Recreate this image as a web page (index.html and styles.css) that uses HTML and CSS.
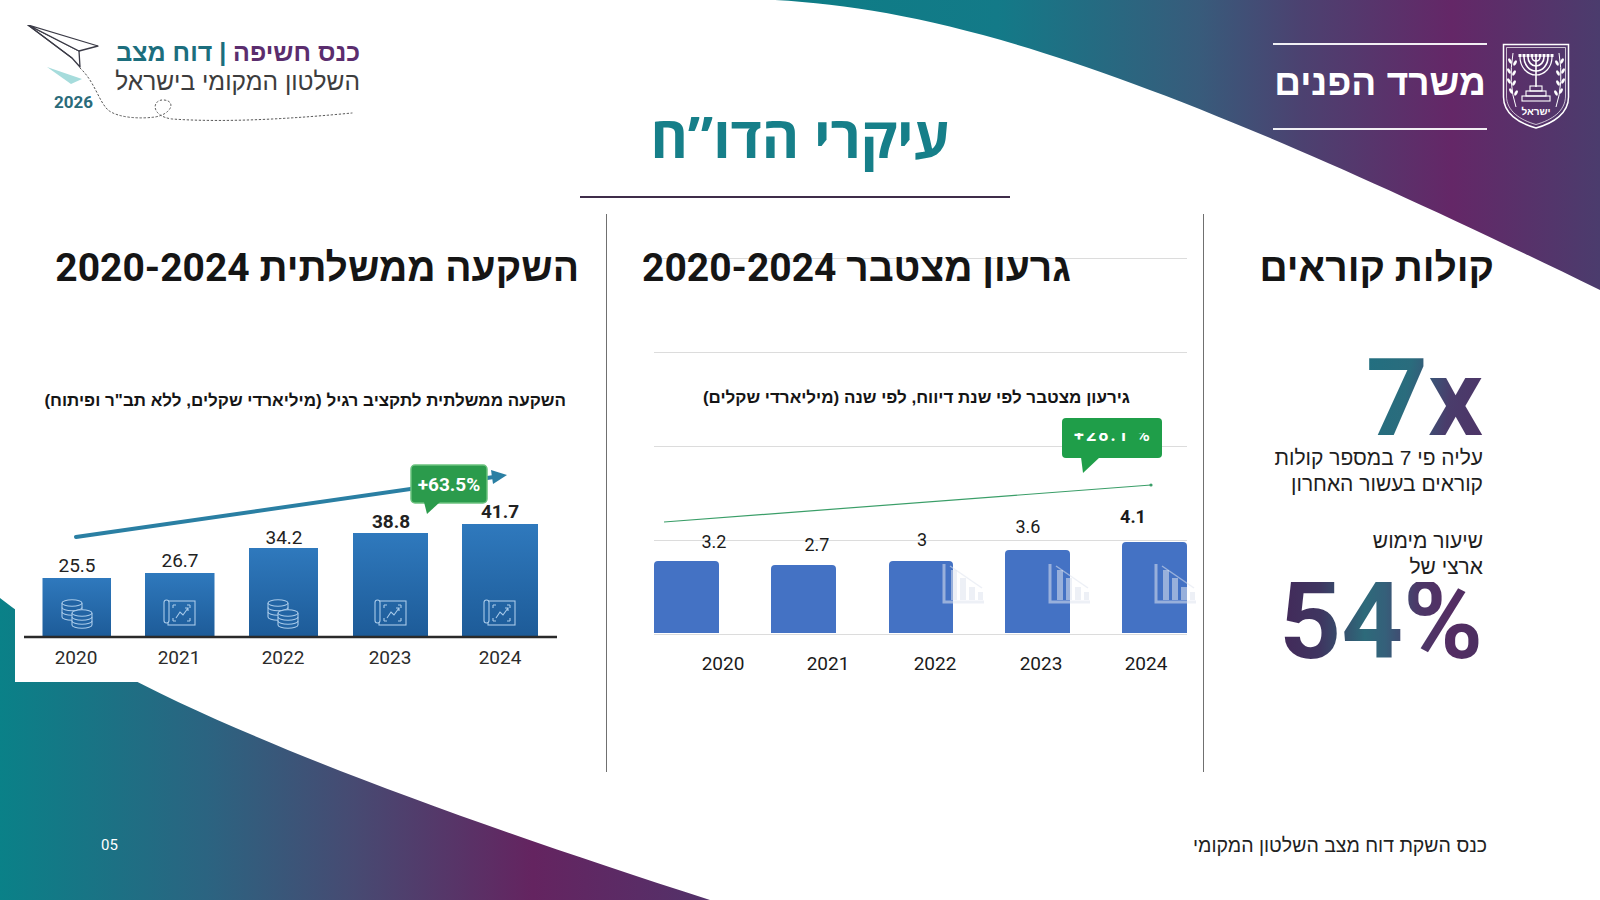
FILE: index.html
```html
<!DOCTYPE html>
<html lang="he">
<head>
<meta charset="utf-8">
<title>עיקרי הדו”ח</title>
<link rel="stylesheet" href="styles.css">
</head>
<body>
<div class="slide">
  <svg class="bg bg-top" viewBox="775 0 825 300" width="825" height="300" aria-hidden="true">
    <defs>
      <linearGradient id="gTop" gradientUnits="userSpaceOnUse" x1="775" y1="0" x2="1600" y2="0">
        <stop offset="0" stop-color="#0d7d86"/>
        <stop offset="0.27" stop-color="#137a88"/>
        <stop offset="0.515" stop-color="#385b7b"/>
        <stop offset="0.64" stop-color="#4c4170"/>
        <stop offset="0.82" stop-color="#642767"/>
        <stop offset="1" stop-color="#4b3c6d"/>
      </linearGradient>
    </defs>
    <path d="M775,0 L1600,0 L1600,290 C1150,70 950,10 775,0 Z" fill="url(#gTop)"/>
  </svg>
  <svg class="bg bg-bottom" viewBox="0 590 710 310" width="710" height="310" aria-hidden="true">
    <defs>
      <linearGradient id="gBot" gradientUnits="userSpaceOnUse" x1="0" y1="0" x2="710" y2="0">
        <stop offset="0" stop-color="#0a8188"/>
        <stop offset="0.29" stop-color="#2b6481"/>
        <stop offset="0.5" stop-color="#474a72"/>
        <stop offset="0.75" stop-color="#642460"/>
        <stop offset="0.9" stop-color="#5a2c66"/>
        <stop offset="1" stop-color="#523269"/>
      </linearGradient>
    </defs>
    <path d="M0,598 C130,700 400,800 710,900 L0,900 Z" fill="url(#gBot)"/>
  </svg>

  <header class="top">
    <div class="brand">
      <svg class="brand-art" viewBox="27 25 333 100" width="333" height="100" aria-hidden="true">
        <polygon points="47,67 82,79 71,84" fill="#a6dcdc"/>
        <path d="M80,68 C95,82 98,100 108,110 C118,118 140,119 155,117 C172,114 176,101 164,100 C152,99 150,116 172,119 C230,123 300,118 352,113" fill="none" stroke="#555" stroke-width="1" stroke-dasharray="1.5 2.5" stroke-linecap="round"/>
        <path d="M28,25 L79,51 L80,67 L72,58 Z" fill="#fff" stroke="#3a3a46" stroke-width="1.3" stroke-linejoin="round"/>
        <path d="M28,25 L98,46 L79,51 Z" fill="#fff" stroke="#3a3a46" stroke-width="1.3" stroke-linejoin="round"/>
        <path d="M28,25 L72,58" stroke="#3a3a46" stroke-width="1.1"/>
      </svg>
      <div class="brand-text">
        <div class="brand-l1">כנס חשיפה <span class="teal">| דוח מצב</span></div>
        <div class="brand-l2">השלטון המקומי בישראל</div>
      </div>
      <div class="brand-year">2026</div>
    </div>

    <div class="title-wrap">
      <h1 class="title">עיקרי הדו”ח</h1>
      <div class="title-rule"></div>
    </div>

    <div class="ministry">
      <div class="min-text">משרד הפנים</div>
      <svg class="emblem" viewBox="0 0 68 86" width="68" height="86" aria-hidden="true">
        <path d="M1.5,1.5 H66.5 V54 C66.5,70 52,80 34,85 C16,80 1.5,70 1.5,54 Z" fill="none" stroke="#fff" stroke-width="1.5"/>
        <path d="M4.5,4.5 H63.5 V53 C63.5,68 50,77 34,81.5 C18,77 4.5,68 4.5,53 Z" fill="none" stroke="#fff" stroke-width="0.7"/>
        <g fill="none" stroke="#fff" stroke-width="1.6">
          <path d="M34,14 V44"/>
          <path d="M30,14 A4,4 0 0 0 38,14"/>
          <path d="M26,14 A8,9 0 0 0 42,14"/>
          <path d="M22,14 A12,14 0 0 0 46,14"/>
          <path d="M18,14 A16,18 0 0 0 50,14" stroke-width="1.2"/>
        </g>
        <g fill="#fff">
          <rect x="16.5" y="11" width="3" height="3"/>
          <rect x="20.5" y="11" width="3" height="3"/>
          <rect x="24.5" y="11" width="3" height="3"/>
          <rect x="28.5" y="11" width="3" height="3"/>
          <rect x="32.5" y="11" width="3" height="3"/>
          <rect x="36.5" y="11" width="3" height="3"/>
          <rect x="40.5" y="11" width="3" height="3"/>
          <rect x="44.5" y="11" width="3" height="3"/>
          <rect x="48.5" y="11" width="3" height="3"/>
        </g>
        <g fill="none" stroke="#fff" stroke-width="1.1">
          <rect x="28" y="43" width="12" height="5"/>
          <rect x="24" y="48" width="20" height="5"/>
          <rect x="20" y="53" width="28" height="5"/>
        </g>
        <g fill="none" stroke="#fff" stroke-width="1">
          <path d="M14,64 Q6,40 11,10"/>
          <path d="M54,64 Q62,40 57,10"/>
        </g>
        <g fill="#fff">
          <ellipse cx="8" cy="18" rx="1.4" ry="3" transform="rotate(-30 8 18)"/>
          <ellipse cx="13" cy="20" rx="1.4" ry="3" transform="rotate(30 13 20)"/>
          <ellipse cx="7" cy="28" rx="1.4" ry="3" transform="rotate(-30 7 28)"/>
          <ellipse cx="12" cy="30" rx="1.4" ry="3" transform="rotate(30 12 30)"/>
          <ellipse cx="7" cy="38" rx="1.4" ry="3" transform="rotate(-30 7 38)"/>
          <ellipse cx="12" cy="40" rx="1.4" ry="3" transform="rotate(30 12 40)"/>
          <ellipse cx="9" cy="48" rx="1.4" ry="3" transform="rotate(-30 9 48)"/>
          <ellipse cx="14" cy="50" rx="1.4" ry="3" transform="rotate(30 14 50)"/>
          <ellipse cx="60" cy="18" rx="1.4" ry="3" transform="rotate(30 60 18)"/>
          <ellipse cx="55" cy="20" rx="1.4" ry="3" transform="rotate(-30 55 20)"/>
          <ellipse cx="61" cy="28" rx="1.4" ry="3" transform="rotate(30 61 28)"/>
          <ellipse cx="56" cy="30" rx="1.4" ry="3" transform="rotate(-30 56 30)"/>
          <ellipse cx="61" cy="38" rx="1.4" ry="3" transform="rotate(30 61 38)"/>
          <ellipse cx="56" cy="40" rx="1.4" ry="3" transform="rotate(-30 56 40)"/>
          <ellipse cx="59" cy="48" rx="1.4" ry="3" transform="rotate(30 59 48)"/>
          <ellipse cx="54" cy="50" rx="1.4" ry="3" transform="rotate(-30 54 50)"/>
        </g>
        <text x="34" y="72" class="emblem-text">ישראל</text>
      </svg>
    </div>
  </header>

  <main class="cols">
    <section class="col col-invest">
      <h2 class="col-head">השקעה ממשלתית 2020-2024</h2>
      <p class="sub">השקעה ממשלתית לתקציב רגיל (מיליארדי שקלים, ללא תב"ר ופיתוח)</p>
      <svg class="chart-invest" viewBox="15 432 575 250" width="575" height="250">
        <defs>
          <linearGradient id="barBlue" x1="0" y1="0" x2="0" y2="1">
            <stop offset="0" stop-color="#2f79bd"/>
            <stop offset="1" stop-color="#1d5b98"/>
          </linearGradient>
          <g id="coins" fill="#2264a4" stroke="#a9cbea" stroke-width="1.1">
            <path d="M2,5 V19 A10,3.2 0 0 0 22,19 V5"/>
            <ellipse cx="12" cy="5" rx="10" ry="3.2"/>
            <path d="M2,9.5 A10,3.2 0 0 0 22,9.5 M2,14 A10,3.2 0 0 0 22,14" fill="none"/>
            <path d="M12,15 V27 A10,3.2 0 0 0 32,27 V15"/>
            <ellipse cx="22" cy="15" rx="10" ry="3.2"/>
            <path d="M12,19 A10,3.2 0 0 0 32,19 M12,23 A10,3.2 0 0 0 32,23" fill="none"/>
          </g>
          <g id="plan" fill="none" stroke="#a9cbea" stroke-width="1.1">
            <rect x="5" y="3" width="27" height="24"/>
            <rect x="1" y="2" width="5" height="23" rx="2.5" fill="#2264a4"/>
            <path d="M10,7 H13 M10,7 V10 M27,7 H24 M27,7 V10 M10,23 H13 M10,23 V20 M27,23 H24 M27,23 V20"/>
            <path d="M13,20 L17,14 L20,17 L25,10 M22,10 H25 V13"/>
          </g>
        </defs>
        <rect x="42.5" y="578" width="68.5" height="59" fill="url(#barBlue)"/>
        <rect x="145" y="573" width="69.5" height="64" fill="url(#barBlue)"/>
        <rect x="249" y="548" width="69" height="89" fill="url(#barBlue)"/>
        <rect x="353" y="533" width="75" height="104" fill="url(#barBlue)"/>
        <rect x="462" y="524" width="76" height="113" fill="url(#barBlue)"/>
        <line x1="24" y1="637" x2="557" y2="637" stroke="#2a2a2a" stroke-width="2.5"/>
        <use href="#coins" x="60" y="598"/>
        <use href="#plan" x="163" y="598"/>
        <use href="#coins" x="266" y="598"/>
        <use href="#plan" x="374" y="598"/>
        <use href="#plan" x="483" y="598"/>
        <g class="lc-val">
          <text x="77" y="572">25.5</text>
          <text x="180" y="567">26.7</text>
          <text x="284" y="544">34.2</text>
          <text x="391" y="528" class="b">38.8</text>
          <text x="500" y="518" class="b">41.7</text>
        </g>
        <g class="lc-year">
          <text x="76" y="664">2020</text>
          <text x="179" y="664">2021</text>
          <text x="283" y="664">2022</text>
          <text x="390" y="664">2023</text>
          <text x="500" y="664">2024</text>
        </g>
        <line x1="76" y1="537" x2="494" y2="477" stroke="#2a7fa3" stroke-width="4" stroke-linecap="round"/>
        <polygon points="507,475 491,470 493,484" fill="#2a7fa3"/>
        <rect x="411" y="465" width="76" height="38" rx="4" fill="#2b9b4c" stroke="#6cc27f" stroke-width="1.5"/>
        <polygon points="424,502 440,502 427,514" fill="#2b9b4c"/>
        <text x="449" y="491" class="lc-callout">+63.5%</text>
      </svg>
    </section>

    <section class="col col-deficit">
      <h2 class="col-head">גרעון מצטבר 2020-2024</h2>
      <p class="sub">גירעון מצטבר לפי שנת דיווח, לפי שנה (מיליארדי שקלים)</p>
      <svg class="chart-deficit" viewBox="640 410 560 270" width="560" height="270">
        <defs>
          <g id="wm" fill="rgba(222,227,238,0.55)">
            <path d="M2,2 V40 H42" fill="none" stroke="rgba(222,227,238,0.55)" stroke-width="3"/>
            <rect x="9" y="8" width="6" height="30"/>
            <rect x="18" y="16" width="6" height="22"/>
            <rect x="27" y="25" width="6" height="13"/>
            <rect x="36" y="30" width="5" height="8"/>
            <path d="M8,4 L40,26" stroke="rgba(222,227,238,0.55)" stroke-width="1.5"/>
          </g>
          <clipPath id="halfclip"><rect x="1062" y="433" width="100" height="20"/></clipPath>
        </defs>
        <g fill="#4472c4">
          <path d="M654,633 V565 Q654,561 658,561 H715 Q719,561 719,565 V633 Z"/>
          <path d="M771,633 V569 Q771,565 775,565 H832 Q836,565 836,569 V633 Z"/>
          <path d="M889,633 V565 Q889,561 893,561 H949 Q953,561 953,565 V633 Z"/>
          <path d="M1005,633 V554 Q1005,550 1009,550 H1066 Q1070,550 1070,554 V633 Z"/>
          <path d="M1122,633 V546 Q1122,542 1126,542 H1183 Q1187,542 1187,546 V633 Z"/>
        </g>
        <use href="#wm" x="942" y="562"/>
        <use href="#wm" x="1048" y="562"/>
        <use href="#wm" x="1154" y="562"/>
        <g class="dc-val">
          <text x="714" y="548">3.2</text>
          <text x="817" y="551">2.7</text>
          <text x="922" y="546">3</text>
          <text x="1028" y="533">3.6</text>
          <text x="1133" y="523" class="b">4.1</text>
        </g>
        <g class="dc-year">
          <text x="723" y="670">2020</text>
          <text x="828" y="670">2021</text>
          <text x="935" y="670">2022</text>
          <text x="1041" y="670">2023</text>
          <text x="1146" y="670">2024</text>
        </g>
        <line x1="664" y1="522" x2="1151" y2="485" stroke="#3a9e68" stroke-width="1.2"/>
        <circle cx="1151" cy="485" r="1.6" fill="#3a9e68"/>
        <rect x="1062" y="418" width="100" height="40" rx="4" fill="#1f9e49"/>
        <polygon points="1081,457 1100,457 1083,473" fill="#1f9e49"/>
        <text x="1113" y="441" class="dc-callout" clip-path="url(#halfclip)">+28.1 %</text>
      </svg>
    </section>

    <section class="col col-calls">
      <h2 class="col-head">קולות קוראים</h2>
      <div class="stats">
        <div class="big big-7x">7x</div>
        <p class="stat-text">עליה פי 7 במספר קולות<br>קוראים בעשור האחרון</p>
        <p class="stat-text stat-text-2">שיעור מימוש<br>ארצי של</p>
        <div class="big big-54">54%</div>
      </div>
    </section>
  </main>

  <footer class="foot">
    <span class="page-no">05</span>
    <span class="foot-text">כנס השקת דוח מצב השלטון המקומי</span>
  </footer>
</div>
</body>
</html>
```

FILE: styles.css
```css
* {
  box-sizing: border-box;
  margin: 0;
  padding: 0;
}

html,
body {
  width: 1600px;
  height: 900px;
  overflow: hidden;
  background: #fff;
}

body {
  font-family: Roboto, "Liberation Sans", "DejaVu Sans", sans-serif;
  color: #1b1b1b;
}

.slide {
  position: relative;
  width: 1600px;
  height: 900px;
  overflow: hidden;
  background: #fff;
}

.bg {
  position: absolute;
  z-index: 0;
  display: block;
}

.bg-top {
  top: 0;
  right: 0;
}

.bg-bottom {
  left: 0;
  bottom: 0;
}

.top,
.cols,
.foot {
  position: relative;
  z-index: 1;
}

/* ---------- header ---------- */
.top {
  height: 214px;
  display: grid;
  grid-template-columns: 1fr auto 1fr;
  align-items: start;
}

.brand {
  position: relative;
  margin: 25px 0 0 27px;
  width: 333px;
  height: 100px;
}

.brand-art {
  position: absolute;
  left: 0;
  top: 0;
}

.brand-text {
  position: relative;
  direction: rtl;
  text-align: right;
  padding-top: 13px;
}

.brand-l1 {
  font: 700 25px/29px "Liberation Sans", "DejaVu Sans", sans-serif;
  color: #5b2d6e;
  white-space: nowrap;
}

.brand-l1 .teal {
  color: #1c6e7d;
}

.brand-l2 {
  font: 400 24.5px/30px "Liberation Sans", "DejaVu Sans", sans-serif;
  color: #3d3d3d;
  white-space: nowrap;
}

.brand-year {
  position: relative;
  font: 700 17px/20px Roboto, "Liberation Sans", sans-serif;
  color: #2a6b7a;
  padding-left: 27px;
  margin-top: -5px;
}

.title-wrap {
  padding-top: 104px;
  display: flex;
  flex-direction: column;
  align-items: center;
}

.title {
  font: 700 57px/64px "Open Sans", "Liberation Sans", "DejaVu Sans", sans-serif;
  color: #167f89;
  direction: rtl;
  white-space: nowrap;
}

.title-rule {
  width: 430px;
  height: 2px;
  margin-top: 28px;
  margin-right: 10px;
  background: #3f2d4a;
}

.ministry {
  justify-self: end;
  margin: 43px 30px 0 0;
  display: flex;
  gap: 15px;
  align-items: flex-start;
}

.min-text {
  width: 214px;
  height: 87px;
  padding-bottom: 8px;
  border-top: 2px solid rgba(255, 255, 255, 0.92);
  border-bottom: 2px solid rgba(255, 255, 255, 0.92);
  display: flex;
  align-items: center;
  justify-content: center;
  color: #fff;
  font: 700 37px/1 "Liberation Sans", "DejaVu Sans", sans-serif;
  direction: rtl;
  white-space: nowrap;
}

.emblem {
  display: block;
}

.emblem-text {
  font: 700 10px "Liberation Sans", sans-serif;
  fill: #fff;
  text-anchor: middle;
  direction: rtl;
}

/* ---------- columns ---------- */
.cols {
  height: 558px;
  display: grid;
  grid-template-columns: 606px 598px 1fr;
}

.col-deficit {
  border-left: 1px solid #707070;
  border-right: 1px solid #707070;
  background-image: repeating-linear-gradient(to bottom, #dcdcdc 0 1px, transparent 1px 94px);
  background-size: 533px 377px;
  background-position: 47px 44px;
  background-repeat: no-repeat;
}

.col-head {
  font: 700 39px/46px Roboto, "Liberation Sans", "DejaVu Sans", sans-serif;
  color: #151515;
  direction: rtl;
  text-align: right;
  white-space: nowrap;
  padding-top: 31px;
}

.sub {
  font: 700 17px/20px "Liberation Sans", "DejaVu Sans", sans-serif;
  color: #151515;
  direction: rtl;
  text-align: right;
  white-space: nowrap;
}

.col-invest .col-head {
  padding-right: 27px;
}

.col-invest .sub {
  margin-top: 100px;
  padding-right: 40px;
}

.chart-invest {
  display: block;
  margin: 21px 0 0 15px;
  background: #fff;
}

.lc-val text {
  font: 400 19px Roboto, "Liberation Sans", sans-serif;
  fill: #222;
  text-anchor: middle;
}

.lc-val text.b,
.dc-val text.b {
  font-weight: 700;
}

.lc-year text {
  font: 400 19px Roboto, "Liberation Sans", sans-serif;
  fill: #2b2b2b;
  text-anchor: middle;
}

.lc-callout {
  font: 700 19px Roboto, "Liberation Sans", sans-serif;
  fill: #fff;
  text-anchor: middle;
}

.col-deficit .col-head {
  padding-right: 132px;
}

.col-deficit .sub {
  margin-top: 97px;
  padding-right: 73px;
}

.chart-deficit {
  display: block;
  margin: 2px 0 0 33px;
}

.dc-val text {
  font: 400 18px Roboto, "Liberation Sans", sans-serif;
  fill: #1a1a1a;
  text-anchor: middle;
}

.dc-year text {
  font: 400 19px Roboto, "Liberation Sans", sans-serif;
  fill: #1a1a1a;
  text-anchor: middle;
}

.dc-callout {
  font: 700 18px Roboto, "Liberation Sans", sans-serif;
  letter-spacing: 2px;
  fill: #fff;
  text-anchor: middle;
}

.col-calls .col-head {
  padding-right: 106px;
}

.stats {
  padding-right: 117px;
  direction: rtl;
  text-align: right;
}

.big {
  width: fit-content;
  margin-left: auto;
  font: 700 108px/80px Roboto, "Liberation Sans", sans-serif;
  direction: ltr;
  color: transparent;
  -webkit-background-clip: text;
  background-clip: text;
  white-space: nowrap;
}

.big-7x {
  margin-top: 67px;
  background-image: linear-gradient(100deg, #226f80 0%, #2a6c7d 35%, #3a5577 52%, #4a3c6b 70%, #4d3467 100%);
}

.big-54 {
  margin-top: 2px;
  line-height: 78px;
  background-image: linear-gradient(90deg, #432959 0%, #3f3560 20%, #2d6a7a 42%, #35607a 52%, #4c3868 68%, #542d63 85%, #4a2f60 100%);
}

.stat-text {
  font: 400 21px/26px "Liberation Sans", "DejaVu Sans", sans-serif;
  color: #1e1e1e;
  white-space: nowrap;
  margin-top: 7px;
}

.stat-text-2 {
  margin-top: 31px;
}

/* ---------- footer ---------- */
.foot {
  margin-top: 63px;
  height: 20px;
  display: flex;
  justify-content: space-between;
  align-items: center;
}

.page-no {
  padding-left: 101px;
  font: 400 15px/20px Roboto, "Liberation Sans", sans-serif;
  color: #fff;
}

.foot-text {
  padding-right: 113px;
  font: 400 19.5px/20px "Liberation Sans", "DejaVu Sans", sans-serif;
  color: #222;
  direction: rtl;
}
```
